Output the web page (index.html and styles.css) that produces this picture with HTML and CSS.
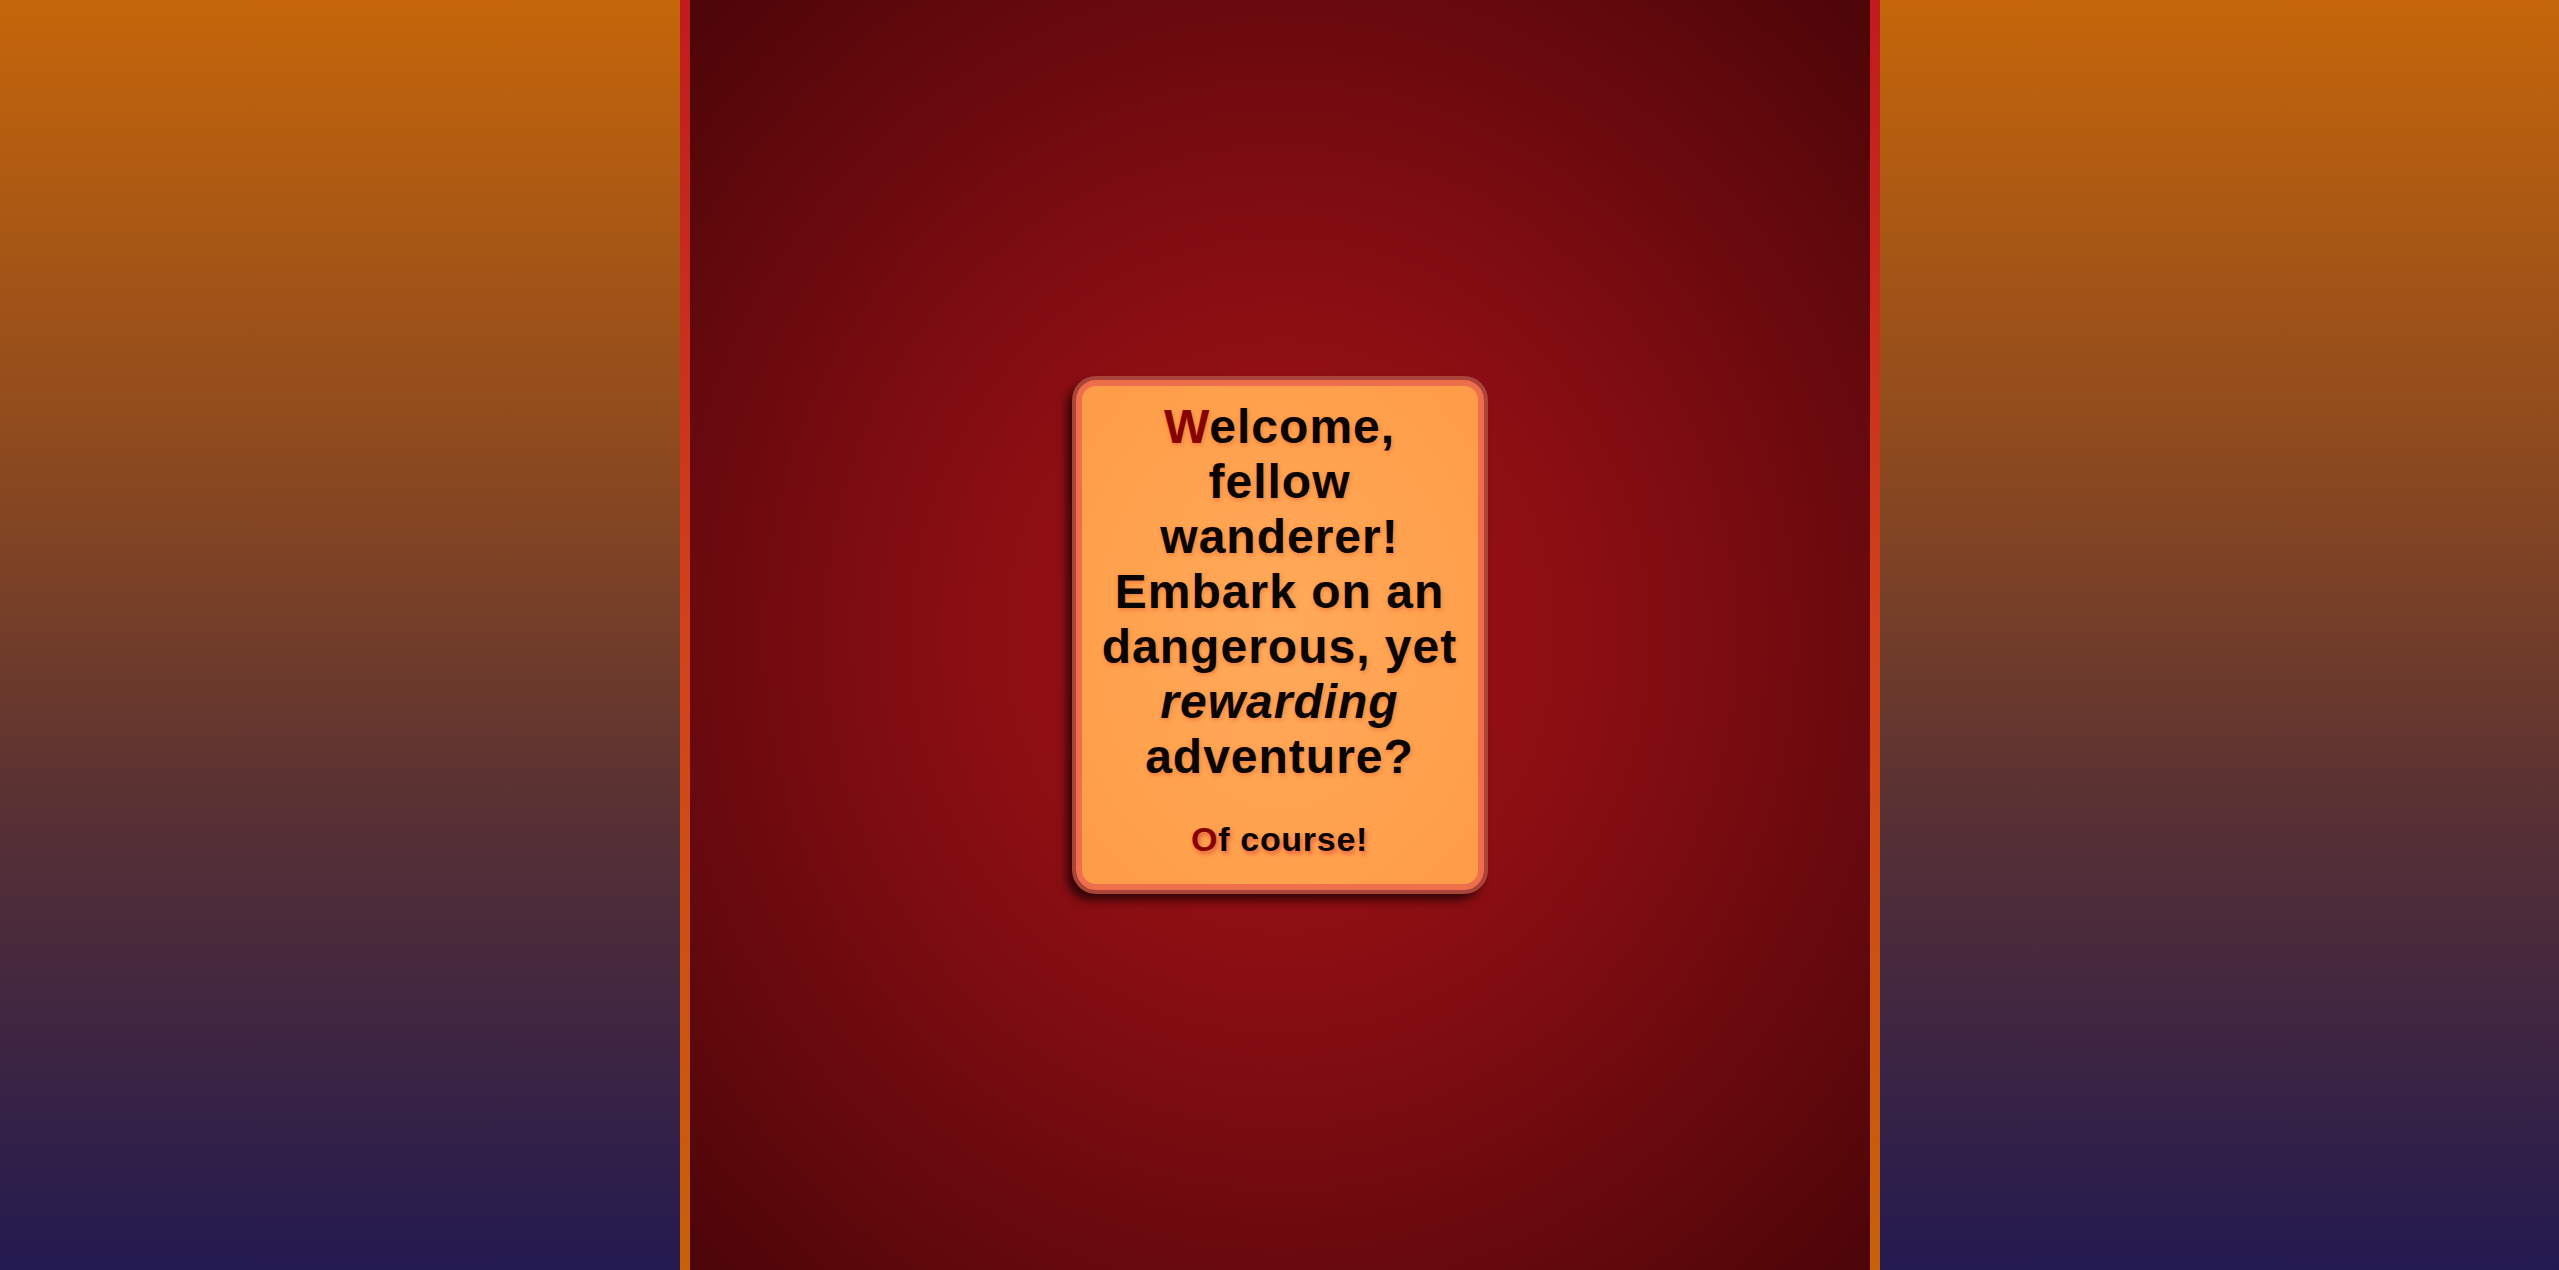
FILE: index.html
```html
<!DOCTYPE html>
<html lang="en">
<head>
<meta charset="utf-8">
<title>Welcome, fellow wanderer!</title>
<link rel="stylesheet" href="styles.css">
</head>
<body>
  <div class="frame">
    <main class="stage">
      <section class="card">
        <h1 class="card-title"><span class="initial">W</span>elcome, fellow wanderer! Embark on an dangerous, yet <em>rewarding</em> adventure?</h1>
        <p class="card-answer"><span class="initial">O</span>f course!</p>
      </section>
    </main>
  </div>
</body>
</html>
```

FILE: styles.css
```css
html, body {
  margin: 0;
  padding: 0;
  height: 100%;
}

body {
  background: linear-gradient(to bottom, #c5660a 0%, #8e4a1e 35%, #563035 65%, #231a50 100%);
  font-family: "Liberation Sans", Arial, sans-serif;
  display: flex;
  justify-content: center;
}

.frame {
  width: 1200px;
  height: 1270px;
  box-sizing: border-box;
  padding: 0 10px;
  background: linear-gradient(to bottom, #c01b1d 0%, #d2421a 50%, #c9600b 100%);
  display: flex;
}

.stage {
  flex: 1;
  background: radial-gradient(ellipse at center, #9e1116 0%, #8c0e13 35%, #6a0a0e 70%, #4c0508 100%);
  display: flex;
  align-items: center;
  justify-content: center;
}

.card {
  width: 408px;
  box-sizing: border-box;
  padding: 13px 16px 25px;
  border: 6px solid #ef6e4c;
  border-radius: 20px;
  background: radial-gradient(ellipse at center, #ffaa5a 0%, #ffa04c 70%, #fe9c48 100%);
  box-shadow: 0 0 0 4px #a9453a, -6px 7px 10px 3px rgba(20, 0, 0, 0.75);
  text-align: center;
  color: #080503;
}

.card-title {
  margin: 0;
  font-size: 48px;
  line-height: 55px;
  font-weight: 700;
  letter-spacing: 1px;
  text-shadow: 1px 2px 4px rgba(220, 80, 40, 0.45);
}

.card-title em {
  font-style: italic;
}

.card-answer {
  margin: 35px 0 0;
  font-size: 34px;
  line-height: 40px;
  font-weight: 700;
  letter-spacing: 0.7px;
  text-shadow: 2px 3px 4px #e8623e;
}

.initial {
  color: #860300;
}
```
